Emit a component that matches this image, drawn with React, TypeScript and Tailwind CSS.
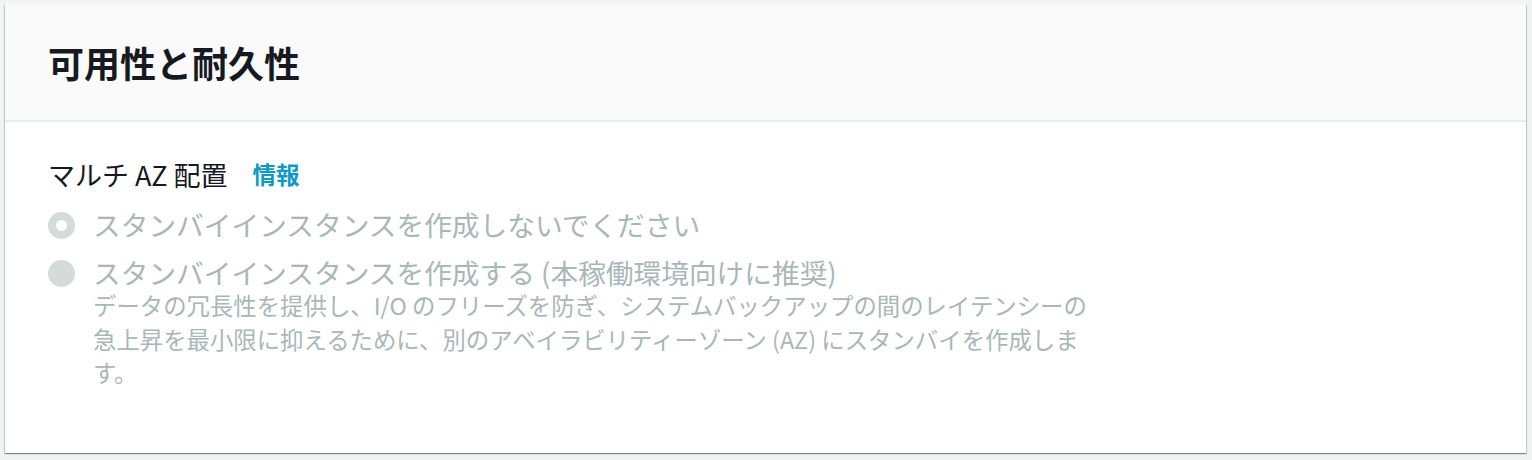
export default function App() {
  return (
    <div className="min-h-screen bg-[#f2f3f3] pt-[4px] pl-[5px] pr-[6px] pb-[7px] font-['Noto_Sans_CJK_JP',sans-serif]">
      <div className="bg-white h-[449px] shadow-[0_1px_1px_0_rgba(0,28,36,0.3),1px_1px_1px_0_rgba(0,28,36,0.15),-1px_1px_1px_0_rgba(0,28,36,0.15)]">
        <div className="h-[118px] bg-[#fafafa] border-b-2 border-[#eaeded] flex items-center px-[43px]">
          <h2 className="text-[36px] font-bold text-[#16191f] leading-none">可用性と耐久性</h2>
        </div>
        <div className="px-[43px] pt-[36px]">
          <div className="flex items-center gap-[25px] h-[34px]">
            <span className="text-[27px] text-[#16191f]">マルチ AZ 配置</span>
            <span className="text-[23.5px] font-bold text-[#0b9ac6]">情報</span>
          </div>
          <div className="mt-[15px] flex flex-col gap-[14px]">
            <label className="flex items-start gap-[18px]">
              <span className="mt-[5px] w-[27px] h-[27px] rounded-full bg-[#d5dbdb] flex items-center justify-center shrink-0">
                <span className="w-[11px] h-[11px] rounded-full bg-white" />
              </span>
              <span className="text-[27.7px] leading-[34px] text-[#aab7b8]">
                スタンバイインスタンスを作成しないでください
              </span>
            </label>
            <label className="flex items-start gap-[18px]">
              <span className="mt-[5px] w-[27px] h-[27px] rounded-full bg-[#d5dbdb] shrink-0" />
              <div className="flex flex-col">
                <span className="text-[27.7px] leading-[34px] text-[#aab7b8]">
                  スタンバイインスタンスを作成する (本稼働環境向けに推奨)
                </span>
                <p className="text-[23.4px] leading-[33.5px] text-[#aab7b8] whitespace-nowrap">
                  データの冗長性を提供し、I/O のフリーズを防ぎ、システムバックアップの間のレイテンシーの
                  <br />
                  急上昇を最小限に抑えるために、別のアベイラビリティーゾーン (AZ) にスタンバイを作成しま
                  <br />
                  す。
                </p>
              </div>
            </label>
          </div>
        </div>
      </div>
    </div>
  )
}
